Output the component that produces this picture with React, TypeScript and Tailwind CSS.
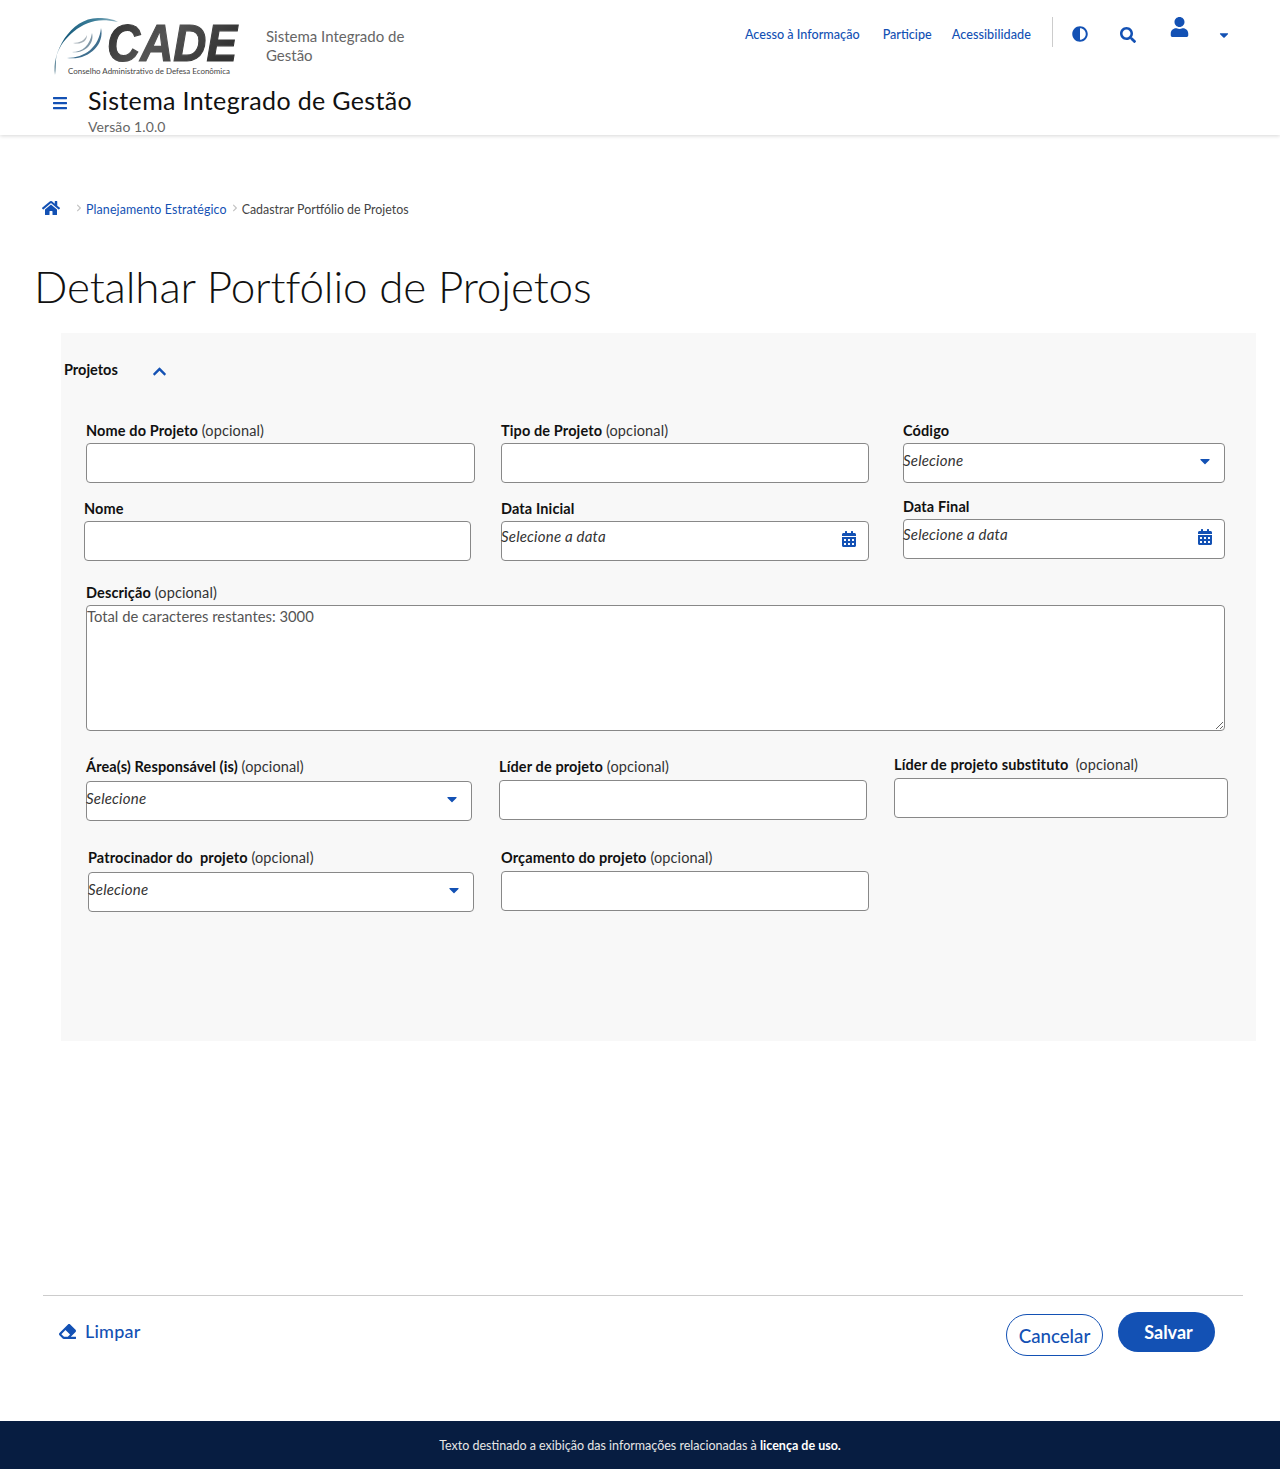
import { FaAdjust, FaBars, FaCalendarAlt, FaCaretDown, FaChevronRight, FaChevronUp, FaEraser, FaHome, FaSearch, FaUser } from "react-icons/fa";

function Logo() {
  return (
    <svg width="190" height="64" viewBox="0 0 190 64" className="shrink-0 overflow-visible">
      <defs>
        <linearGradient id="swoosh" x1="0" y1="1" x2="1" y2="0">
          <stop offset="0" stopColor="#8aa4b0" />
          <stop offset="0.4" stopColor="#15597a" />
          <stop offset="0.8" stopColor="#3d7f9a" />
          <stop offset="1" stopColor="#9dbcc8" />
        </linearGradient>
        <linearGradient id="cade" x1="0" y1="0" x2="1" y2="0.4">
          <stop offset="0" stopColor="#2d2d2d" />
          <stop offset="0.5" stopColor="#555555" />
          <stop offset="1" stopColor="#333333" />
        </linearGradient>
      </defs>
      <path d="M2 60C-2 38 18 2 46 3C54 3 60 4 65 7C55 5 48 5 42 6C22 10 4 30 3 45C3 50 3 55 2 60Z" fill="url(#swoosh)" />
      <path d="M48 13C52 30 35 46 14 43C32 43 46 32 48 13Z" fill="#3f6f8f" />
      <path d="M39 18C42 30 30 39 19 37C30 37 37 30 39 18Z" fill="#7f97a7" />
      <path d="M34 20C34 27 27 30 20 28C27 28 32 25 34 20Z" fill="#a5b0b8" />
      <text x="54" y="46" fontFamily="Liberation Sans" fontWeight="700" fontStyle="italic" fontSize="51" textLength="130" lengthAdjust="spacingAndGlyphs" stroke="url(#cade)" strokeWidth="1.2" fill="url(#cade)">CADE</text>
      <text x="15" y="59" fontFamily="Lato" fontSize="8" textLength="162" lengthAdjust="spacingAndGlyphs" fill="#444444">Conselho Administrativo de Defesa Econômica</text>
    </svg>
  );
}

function Header() {
  return (
    <header className="h-[135px] bg-white shadow-[0_1px_4px_rgba(0,0,0,0.16)] relative">
      <div className="flex h-[84px] items-start pl-[53px]">
        <div className="mt-[15px]">
          <Logo />
        </div>
        <div className="ml-[23px] mt-[27px] w-[150px] text-[15px] leading-[19px] text-[#666666]">Sistema Integrado de Gestão</div>
        <nav className="ml-auto flex items-start text-[12.6px] font-medium text-[#1351b4]">
          <a className="mt-[26px] tracking-[0.02px]">Acesso à Informação</a>
          <a className="ml-[23px] mt-[26px]">Participe</a>
          <a className="ml-[20px] mt-[26px] tracking-[0.07px]">Acessibilidade</a>
          <div className="ml-[21px] mt-[17px] h-[30px] w-px bg-[#cccccc]" />
          <FaAdjust className="ml-[19px] mt-[26px] text-[16px]" />
          <FaSearch className="ml-[32px] mt-[27px] text-[16px]" />
          <FaUser className="ml-[33px] mt-[17px] h-[20px] w-[21px]" />
          <FaCaretDown className="ml-[27px] mt-[28px] mr-[49px] text-[14px]" />
        </nav>
      </div>
      <div className="flex items-start pl-[52px]">
        <FaBars className="mt-[11px] text-[16px] text-[#1351b4]" />
        <div className="ml-[20px]">
          <div className="text-[25px] leading-[32px] tracking-[0.35px] text-[#111111]">Sistema Integrado de Gestão</div>
          <div className="mt-[2px] text-[14px] leading-[18px] tracking-[0.1px] text-[#666666]">Versão 1.0.0</div>
        </div>
      </div>
    </header>
  );
}

function Label({ name, optional }: { name: string; optional?: string }) {
  return (
    <div className="h-5 whitespace-pre text-[14.5px] leading-[22px] tracking-[0.12px] text-[#333333]">
      <span className="font-bold text-[#111111]">{name}</span>
      {optional ? " " + optional : ""}
    </div>
  );
}

function Box({ text, icon }: { text?: string; icon?: "caret" | "calendar" }) {
  return (
    <div className="flex h-10 items-start justify-between rounded-[4px] border border-[#888888] bg-white">
      <span className={`-ml-px text-[15px] italic leading-[18px] tracking-[0.2px] text-[#333333] ${icon === "calendar" ? "mt-[5px]" : "mt-[7px]"}`}>{text}</span>
      {icon === "caret" && <FaCaretDown className="mr-[11px] mt-[9px] text-[16px] text-[#1351b4]" />}
      {icon === "calendar" && <FaCalendarAlt className="mr-[11px] mt-[9px] text-[16px] text-[#1351b4]" />}
    </div>
  );
}

export default function App() {
  return (
    <div className="min-h-[1469px] bg-white font-['Lato',sans-serif] flex flex-col">
      <Header />

      <div className="ml-[42px] mt-[64px] flex h-[18px] items-center text-[12.4px]">
        <FaHome className="text-[18px] text-[#1351b4]" />
        <FaChevronRight className="ml-[15px] text-[8px] text-[#c4c4c4]" />
        <a className="ml-[3px] mt-[4px] tracking-[0.12px] text-[#1351b4]">Planejamento Estratégico</a>
        <FaChevronRight className="ml-[4px] text-[8px] text-[#c4c4c4]" />
        <span className="ml-[3px] mt-[4px] text-[#444444]">Cadastrar Portfólio de Projetos</span>
      </div>

      <h1 className="ml-[34px] mt-[39px] text-[44px] font-light leading-[60px] tracking-[-0.15px] text-[#111111]">Detalhar Portfólio de Projetos</h1>

      <section className="ml-[61px] mt-[17px] h-[708px] w-[1195px] bg-[#f8f8f8]">
        <div className="flex h-[87px] items-start pl-[3px] pt-[27px]">
          <span className="text-[14.5px] font-bold leading-5 text-[#111111]">Projetos</span>
          <FaChevronUp className="ml-[34px] mt-[4px] text-[15px] text-[#1351b4]" />
        </div>

        <div className="flex items-start pl-[25px]">
          <div className="w-[389px]">
            <Label name="Nome do Projeto" optional="(opcional)" />
            <div className="mt-[3px]"><Box /></div>
          </div>
          <div className="ml-[26px] w-[368px]">
            <Label name="Tipo de Projeto" optional="(opcional)" />
            <div className="mt-[3px]"><Box /></div>
          </div>
          <div className="ml-[34px] w-[322px]">
            <Label name="Código" />
            <div className="mt-[3px]"><Box text="Selecione" icon="caret" /></div>
          </div>
        </div>

        <div className="mt-[15px] flex items-start pl-[23px]">
          <div className="w-[387px]">
            <Label name="Nome" />
            <div className="mt-[3px]"><Box /></div>
          </div>
          <div className="ml-[30px] w-[368px]">
            <Label name="Data Inicial" />
            <div className="mt-[3px]"><Box text="Selecione a data" icon="calendar" /></div>
          </div>
          <div className="ml-[34px] -mt-[2px] w-[322px]">
            <Label name="Data Final" />
            <div className="mt-[3px]"><Box text="Selecione a data" icon="calendar" /></div>
          </div>
        </div>

        <div className="ml-[25px] mt-[21px] w-[1139px]">
          <Label name="Descrição" optional="(opcional)" />
          <textarea
            readOnly
            className="mt-[3px] block h-[126px] w-full resize rounded-[4px] border border-[#888888] bg-white text-[14.8px] leading-[20px] text-[#555555] outline-none"
            defaultValue="Total de caracteres restantes: 3000"
          />
        </div>

        <div className="mt-[25px] flex items-start pl-[25px]">
          <div className="w-[386px]">
            <Label name="Área(s) Responsável (is)" optional="(opcional)" />
            <div className="mt-[5px]"><Box text="Selecione" icon="caret" /></div>
          </div>
          <div className="ml-[27px] w-[368px]">
            <Label name="Líder de projeto" optional="(opcional)" />
            <div className="mt-[4px]"><Box /></div>
          </div>
          <div className="ml-[27px] -mt-[2px] w-[334px]">
            <Label name="Líder de projeto substituto " optional="(opcional)" />
            <div className="mt-[4px]"><Box /></div>
          </div>
        </div>

        <div className="mt-[26px] flex items-start pl-[27px]">
          <div className="w-[386px]">
            <Label name="Patrocinador do  projeto" optional="(opcional)" />
            <div className="mt-[5px]"><Box text="Selecione" icon="caret" /></div>
          </div>
          <div className="ml-[27px] w-[368px]">
            <Label name="Orçamento do projeto" optional="(opcional)" />
            <div className="mt-[4px]"><Box /></div>
          </div>
        </div>
      </section>

      <div className="mx-[43px] mt-[254px] h-px w-[1200px] bg-[#cccccc]" />

      <div className="ml-[43px] flex w-[1172px] items-start">
        <div className="ml-[16px] mt-[22px] flex items-center text-[#1351b4]">
          <FaEraser className="text-[17px]" />
          <span className="ml-[9px] text-[18px] font-medium leading-[26px] tracking-[0.2px]">Limpar</span>
        </div>
        <button className="ml-auto mt-[18px] h-[42px] w-[97px] rounded-full border border-[#1351b4] bg-white pt-[2px] text-[18.7px] font-medium text-[#1351b4]">Cancelar</button>
        <button className="ml-[15px] mt-[16px] h-10 w-[97px] rounded-full bg-[#1351b4] pl-[4px] text-[18px] font-bold text-white">Salvar</button>
      </div>

      <footer className="mt-auto flex h-12 items-center justify-center bg-[#071d41] pt-[3px] text-[12.5px] text-[#e6e6e6]">
        <span>Texto destinado a exibição das informações relacionadas à <b className="text-white">licença de uso.</b></span>
      </footer>
    </div>
  );
}
